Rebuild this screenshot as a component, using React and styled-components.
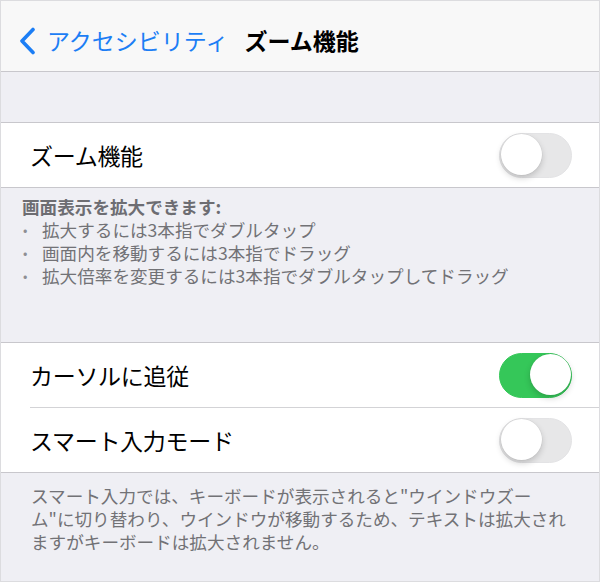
import React from 'react';
import styled, { createGlobalStyle } from 'styled-components';

const GlobalStyle = createGlobalStyle`
  html, body {
    margin: 0;
    padding: 0;
    background: #efeff4;
  }
  body {
    font-family: "Noto Sans CJK JP", "Noto Sans", sans-serif;
    -webkit-font-smoothing: antialiased;
  }
`;

const Screen = styled.div`
  width: 600px;
  height: 582px;
  box-sizing: border-box;
  border: 1px solid #dcdcdf;
  background: #efeff4;
  overflow: hidden;
`;

const NavBar = styled.header`
  display: flex;
  align-items: center;
  gap: 16px;
  height: 71px;
  box-sizing: border-box;
  padding: 9px 0 0 17px;
  background: #f8f8f8;
  border-bottom: 1px solid #c8c7cc;
`;

const BackButton = styled.div`
  display: flex;
  align-items: center;
  gap: 11px;
  color: #1c7ef5;
  font-size: 23px;
  line-height: 1;

  svg {
    display: block;
  }
`;

const NavTitle = styled.h1`
  margin: 0;
  font-size: 23px;
  font-weight: 700;
  color: #000;
  line-height: 1;
`;

const Spacer = styled.div`
  height: 50px;
`;

const Group = styled.section`
  background: #fff;
  border-top: 1px solid #c8c7cc;
  border-bottom: 1px solid #c8c7cc;
  padding-left: 29px;
`;

const Row = styled.div`
  display: flex;
  align-items: center;
  justify-content: space-between;
  height: 64px;
  padding-right: 27px;
  box-sizing: content-box;

  & + & {
    border-top: 1px solid #d3d3d6;
  }
`;

const Label = styled.span`
  font-size: 23px;
  color: #000;
  letter-spacing: -0.3px;
`;

const Track = styled.div`
  position: relative;
  width: 73px;
  height: 45px;
  border-radius: 23px;
  box-sizing: border-box;
  background: ${(p) => (p.on ? '#35c759' : '#e7e7e8')};
  border: 1.5px solid ${(p) => (p.on ? '#35c759' : '#e3e3e5')};
`;

const Knob = styled.div`
  position: absolute;
  top: 0.5px;
  left: ${(p) => (p.on ? '29.5px' : '0.5px')};
  width: 41px;
  height: 41px;
  border-radius: 50%;
  background: #fff;
  box-shadow: 0 3px 6px rgba(0, 0, 0, 0.18), 0 0 0 0.5px rgba(0, 0, 0, 0.06);
`;

const Footer = styled.div`
  box-sizing: border-box;
  height: ${(p) => p.height}px;
  padding: ${(p) => p.pad};
  color: #727276;
  font-size: 17.6px;
  line-height: 23px;
  white-space: nowrap;
`;

const FooterHead = styled.div`
  font-weight: 700;
  color: #6d6d72;
`;

const BulletList = styled.ul`
  list-style: none;
  margin: 0;
  padding: 0;
`;

const Bullet = styled.li`
  display: flex;

  &::before {
    content: '•';
    width: 19px;
    flex: none;
    font-size: 13px;
    color: #8e8e93;
    padding-left: 1px;
  }
`;

const Toggle = ({ on }) => (
  <Track on={on ? 1 : 0}>
    <Knob on={on ? 1 : 0} />
  </Track>
);

const Chevron = () => (
  <svg width="18" height="28" viewBox="0 0 18 28">
    <path
      d="M15 2.5 L4 14 L15 25.5"
      fill="none"
      stroke="#1c7ef5"
      strokeWidth="3.6"
      strokeLinecap="round"
      strokeLinejoin="round"
    />
  </svg>
);

const App = () => {
  return (
    <>
      <GlobalStyle />
      <Screen>
        <NavBar>
          <BackButton>
            <Chevron />
            アクセシビリティ
          </BackButton>
          <NavTitle>ズーム機能</NavTitle>
        </NavBar>
        <Spacer />
        <Group>
          <Row>
            <Label>ズーム機能</Label>
            <Toggle />
          </Row>
        </Group>
        <Footer height={154} pad="7px 30px 0 21px">
          <FooterHead>画面表示を拡大できます:</FooterHead>
          <BulletList>
            <Bullet>拡大するには3本指でダブルタップ</Bullet>
            <Bullet>画面内を移動するには3本指でドラッグ</Bullet>
            <Bullet>拡大倍率を変更するには3本指でダブルタップしてドラッグ</Bullet>
          </BulletList>
        </Footer>
        <Group>
          <Row>
            <Label>カーソルに追従</Label>
            <Toggle on />
          </Row>
          <Row>
            <Label>スマート入力モード</Label>
            <Toggle />
          </Row>
        </Group>
        <Footer height={107} pad="11px 20px 0 30px">
          スマート入力では、キーボードが表示されると"ウインドウズー
          <br />
          ム"に切り替わり、ウインドウが移動するため、テキストは拡大され
          <br />
          ますがキーボードは拡大されません。
        </Footer>
      </Screen>
    </>
  );
};

export default App;
